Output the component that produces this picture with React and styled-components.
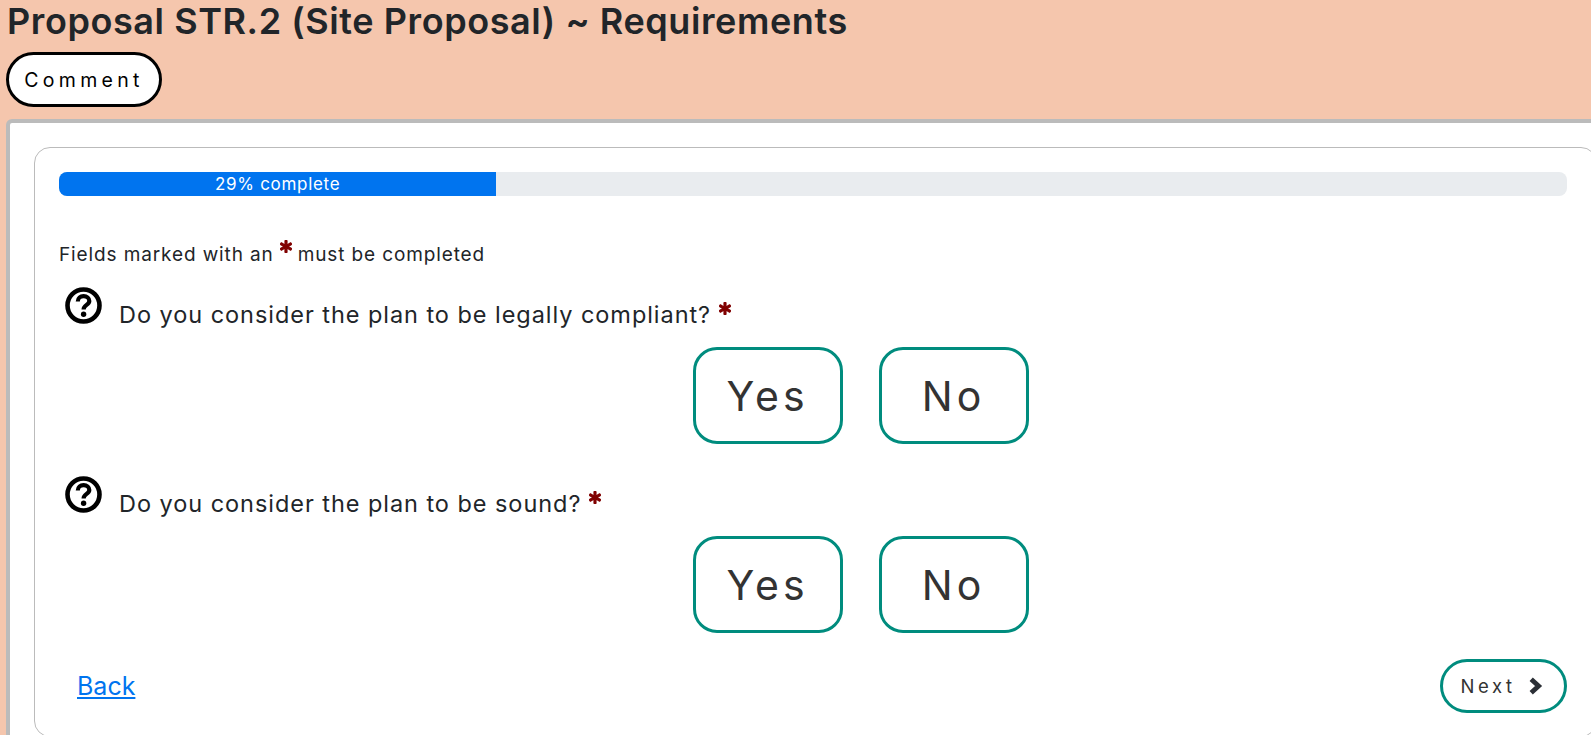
import React from "react";
import styled, { createGlobalStyle } from "styled-components";
import { FaAsterisk } from "react-icons/fa";

const Global = createGlobalStyle`
  html, body { margin: 0; padding: 0; height: 735px; overflow: hidden; background: #f5c6ad; }
  * { box-sizing: border-box; }
  body { font-family: Inter, "Liberation Sans", sans-serif; color: #212529; }
`;

const Page = styled.div`
  width: 1591px;
  height: 735px;
  overflow: hidden;
  background: #f5c6ad;
`;

const Header = styled.header`
  height: 119px;
  padding: 0 0 0 6px;
`;

const Title = styled.h1`
  margin: 0;
  height: 52px;
  padding: 1px 0 0 1px;
  font-size: 36px;
  line-height: 40px;
  font-weight: 600;
  letter-spacing: 0.58px;
  color: #212529;
  white-space: nowrap;
`;

const CommentButton = styled.button`
  display: block;
  width: 156px;
  height: 55px;
  padding: 0;
  border: 3px solid #000;
  border-radius: 28px;
  background: #fff;
  color: #000;
  font: 400 19.5px Inter, sans-serif;
  letter-spacing: 4.3px;
`;

const Panel = styled.main`
  margin-left: 6px;
  width: 1640px;
  height: 700px;
  padding: 24px 0 0 24px;
  background: #fff;
  border: 4px solid #bbb;
  border-radius: 6px;
`;

const Card = styled.section`
  width: 1563px;
  height: 590px;
  padding: 24px 29px 0 24px;
  border: 1px solid #bbb;
  border-radius: 16px;
`;

const Track = styled.div`
  height: 24px;
  border-radius: 8px;
  background: #e9ecef;
  overflow: hidden;
`;

const Fill = styled.div`
  height: 100%;
  background: #0074ef;
  color: #fff;
  font-size: 17px;
  letter-spacing: 0.7px;
  line-height: 24px;
  text-align: center;
`;

const Note = styled.p`
  display: flex;
  align-items: flex-start;
  gap: 6px;
  margin: 44px 0 0;
  height: 30px;
  font-size: 19px;
  letter-spacing: 0.88px;
  line-height: 30px;
  color: #212529;
`;

const Star = styled(FaAsterisk)`
  flex: none;
  width: 12px;
  height: 13px;
  margin-top: 0;
  color: #800000;
  stroke-width: 50px;
`;

const QuestionRow = styled.div`
  display: flex;
  align-items: flex-start;
  height: 60px;
  margin-top: ${(p) => p.$top}px;
  padding-left: 6px;
`;

const HelpIcon = styled.svg`
  flex: none;
  width: 37px;
  height: 37px;
`;

const QuestionText = styled.span`
  margin: 13px 8px 0 17px;
  font-size: 23.5px;
  letter-spacing: 0.95px;
  line-height: 30px;
  color: #212529;
`;

const QuestionStar = styled(Star)`
  margin-top: 15px;
`;

const Choices = styled.div`
  display: flex;
  justify-content: center;
  gap: 36px;
  padding-left: 95px;
`;

const Choice = styled.button`
  width: 150px;
  height: 97px;
  padding: 0;
  border: 3px solid #008c7e;
  border-radius: 24px;
  background: #fff;
  color: #333;
  font: 400 41px Inter, sans-serif;
  letter-spacing: 4px;
`;

const Footer = styled.div`
  display: flex;
  justify-content: space-between;
  align-items: center;
  height: 53px;
  margin-top: 26px;
  padding-left: 18px;
`;

const BackLink = styled.a`
  color: #0074ef;
  font-size: 25px;
  text-decoration: underline;
`;

const NextButton = styled.button`
  display: flex;
  align-items: center;
  justify-content: center;
  gap: 12px;
  width: 127px;
  height: 54px;
  padding: 0 4px 0 0;
  border: 3px solid #008c7e;
  border-radius: 27px;
  background: #fff;
  color: #333;
  font: 400 18.5px Inter, sans-serif;
  letter-spacing: 3.6px;
`;

const ChevronIcon = styled.svg`
  flex: none;
  width: 15px;
  height: 18px;
`;

const questions = [
  { text: "Do you consider the plan to be legally compliant?", top: 17 },
  { text: "Do you consider the plan to be sound?", top: 32 },
];

export default function App() {
  return (
    <Page>
      <Global />
      <Header>
        <Title>Proposal STR.2 (Site Proposal) ~ Requirements</Title>
        <CommentButton>Comment</CommentButton>
      </Header>
      <Panel>
        <Card>
          <Track>
            <Fill style={{ width: "29%" }}>29% complete</Fill>
          </Track>
          <Note>
            Fields marked with an <Star /> must be completed
          </Note>
          {questions.map((q) => (
            <div key={q.text}>
              <QuestionRow $top={q.top}>
                <HelpIcon viewBox="0 0 37 37">
                  <circle cx="18.5" cy="18.5" r="16" fill="none" stroke="#000" strokeWidth="4.6" />
                  <path
                    d="M12.8 14.6 C12.8 11 15.3 9.2 18.6 9.2 C21.9 9.2 24.3 11.2 24.3 14 C24.3 18 18.6 17.8 18.6 22.4"
                    fill="none"
                    stroke="#000"
                    strokeWidth="4.2"
                  />
                  <circle cx="18.6" cy="27.2" r="2.7" fill="#000" />
                </HelpIcon>
                <QuestionText>{q.text}</QuestionText>
                <QuestionStar />
              </QuestionRow>
              <Choices>
                <Choice>Yes</Choice>
                <Choice>No</Choice>
              </Choices>
            </div>
          ))}
          <Footer>
            <BackLink href="#">Back</BackLink>
            <NextButton>
              Next
              <ChevronIcon viewBox="0 0 15 18">
                <path d="M3.2 2.2 L10.6 9 L3.2 15.8" fill="none" stroke="#2b2f36" strokeWidth="4.8" />
              </ChevronIcon>
            </NextButton>
          </Footer>
        </Card>
      </Panel>
    </Page>
  );
}
